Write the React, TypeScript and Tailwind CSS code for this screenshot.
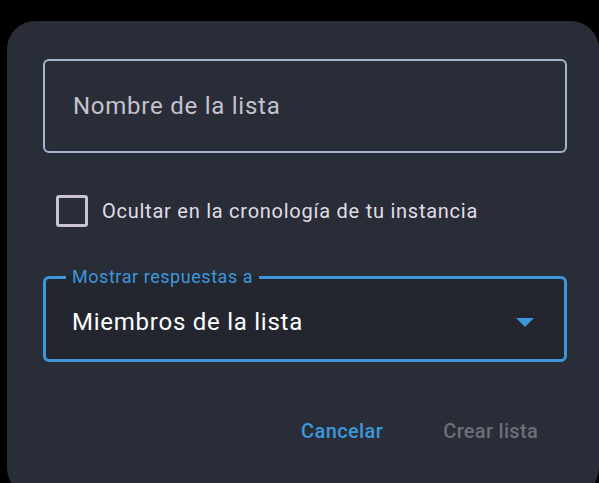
export default function App() {
  return (
    <div className="h-[483px] w-[599px] overflow-hidden bg-black font-['Roboto',sans-serif]">
      <div className="ml-[7px] mt-[21px] h-[475px] w-[592px] rounded-[28px] bg-[#292d38] pl-[36px] pr-[26px] pt-[38px]">
        {/* Name field */}
        <div className="flex h-[94px] w-[524px] items-center rounded-[6px] border-2 border-[#a5b5ce] px-[28px]">
          <span className="text-[24px] tracking-[0.75px] text-[#c6c1cf]">Nombre de la lista</span>
        </div>

        {/* Checkbox */}
        <div className="mt-[42px] flex items-center pl-[13px]">
          <div className="h-[32px] w-[32px] rounded-[3px] border-[3px] border-[#c9c3d2]" />
          <span className="ml-[14px] text-[20px] tracking-[0.75px] text-[#e1dde7]">
            Ocultar en la cronología de tu instancia
          </span>
        </div>

        {/* Select */}
        <fieldset className="mt-[40px] h-[95px] w-[524px] rounded-[6px] border-[3px] border-[#3d97db] bg-[#23262f] px-[26px]">
          <legend className="ml-[-6px] px-[6px] text-[18px] leading-[20px] tracking-[0.55px] text-[#3d97db]">
            Mostrar respuestas a
          </legend>
          <div className="flex h-[70px] items-center justify-between">
            <span className="text-[24px] tracking-[0.75px] text-white">Miembros de la lista</span>
            <svg width="18" height="9" viewBox="0 0 18 9" className="mr-[4px]">
              <path d="M0 0 L18 0 L9 9 Z" fill="#3d97db" />
            </svg>
          </div>
        </fieldset>

        {/* Actions */}
        <div className="mt-[54px] flex justify-end pr-[35px]">
          <button className="text-[20px] font-medium tracking-[0.4px] text-[#3d97db]">Cancelar</button>
          <button className="ml-[60px] text-[20px] font-medium tracking-[0.3px] text-[#6b6f7a]">Crear lista</button>
        </div>
      </div>
    </div>
  );
}
